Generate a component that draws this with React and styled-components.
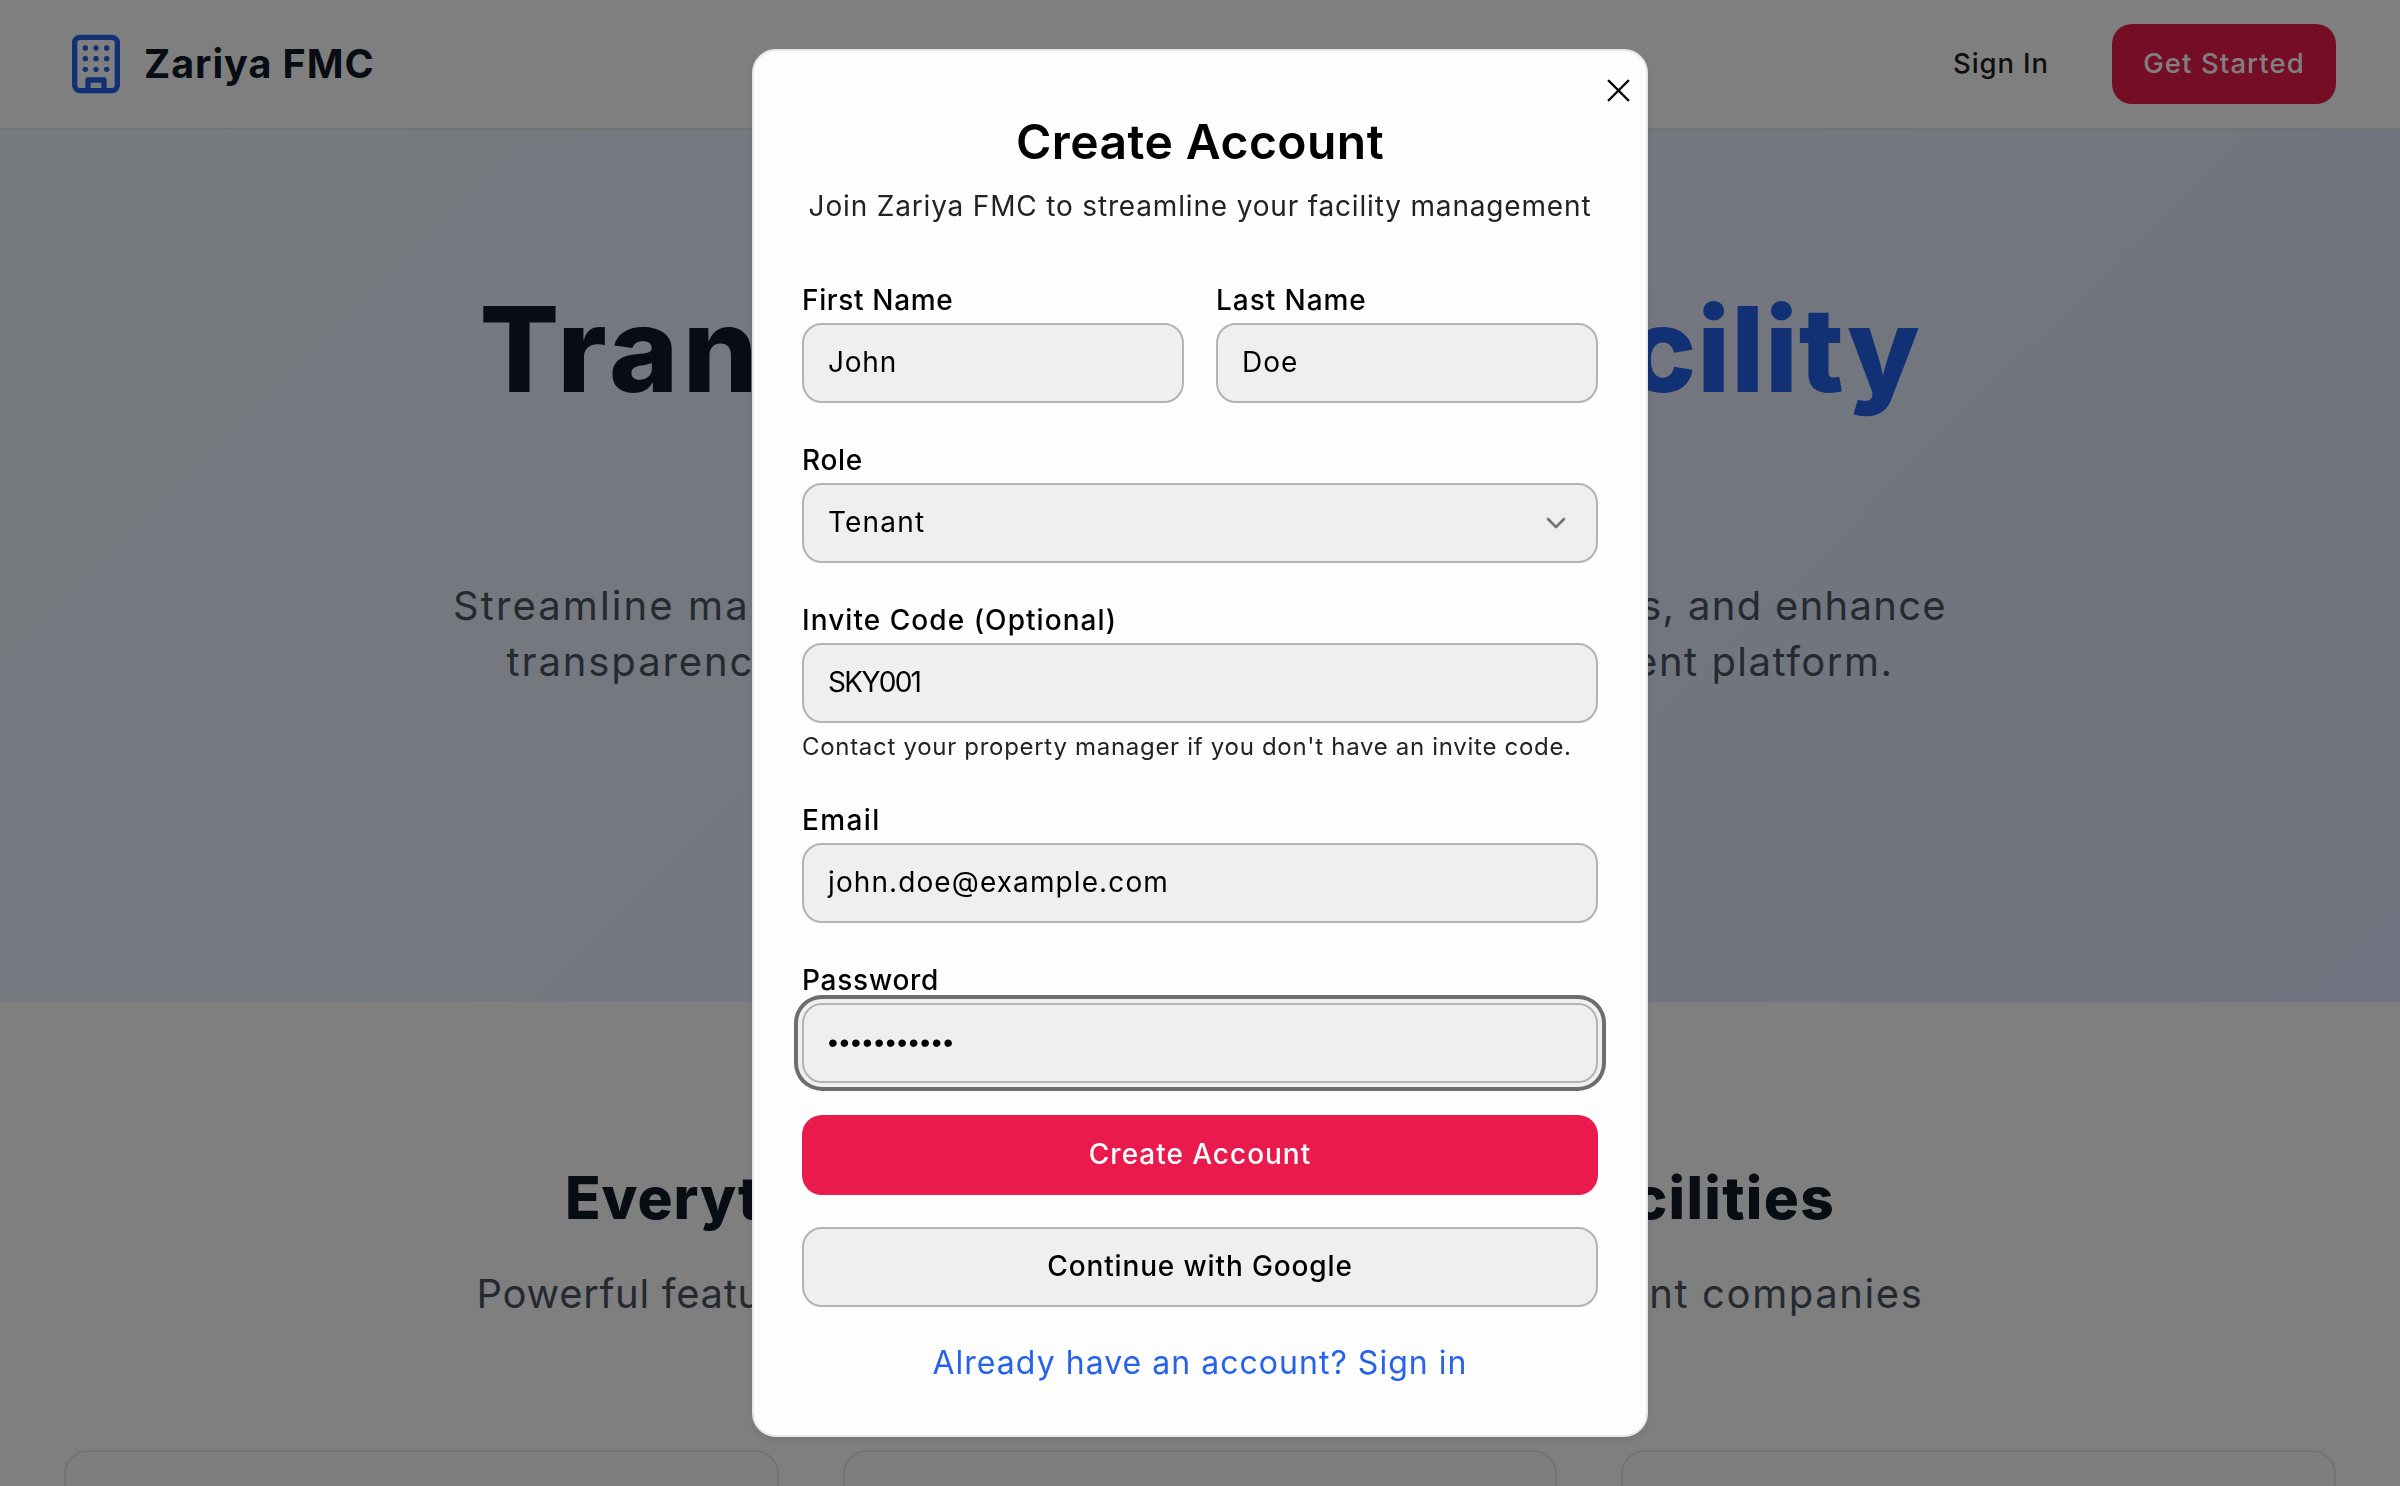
import React from "react";
import styled, { createGlobalStyle, css } from "styled-components";

const GlobalStyle = createGlobalStyle`
  *, *::before, *::after { box-sizing: border-box; }
  html, body, #root { height: 100%; }
  body {
    margin: 0;
    overflow: hidden;
    background: #ffffff;
    font-family: Inter, "Open Sans", sans-serif;
    color: #000;
  }
  h1, h2, p { margin: 0; }
  button, input { font-family: inherit; }
`;

/* ---------- landing page ---------- */

const Page = styled.div`
  width: 2400px;
  height: 1486px;
  overflow: hidden;
  background: #ffffff;
`;

const Header = styled.header`
  display: flex;
  align-items: center;
  justify-content: space-between;
  height: 130px;
  padding: 0 64px;
  border-bottom: 2px solid #e5e7eb;
`;

const Brand = styled.div`
  display: flex;
  align-items: center;
  gap: 16px;
  color: #2563eb;
`;

const BrandName = styled.span`
  font-size: 39.5px;
  line-height: 56px;
  font-weight: 700;
  letter-spacing: 0.95px;
  color: #111827;
`;

const Nav = styled.nav`
  display: flex;
  align-items: center;
  gap: 32px;
`;

const NavButton = styled.button`
  height: 80px;
  padding: 0 0 2px;
  border: 0;
  border-radius: 20px;
  font-size: 27.5px;
  font-weight: 500;
  text-align: center;
  ${({ $primary }) =>
    $primary
      ? css`
          width: 224px;
          background: #ea1a4d;
          color: #fff;
          letter-spacing: 1.1px;
        `
      : css`
          width: 158px;
          background: transparent;
          color: #1c1c1c;
          letter-spacing: 0.88px;
        `}
`;

const Hero = styled.section`
  display: flex;
  flex-direction: column;
  align-items: center;
  height: 872px;
  padding-top: 159px;
  background: linear-gradient(135deg, #eff6ff, #e0e7ff);
`;

const HeroTitle = styled.h1`
  display: flex;
  flex-direction: column;
  align-items: center;
  font-size: 118px;
  line-height: 120px;
  font-weight: 800;
  color: #111827;
`;

const Line = styled.span`
  display: flex;
  justify-content: space-between;
  width: ${({ $width }) => $width}px;
  white-space: pre;
`;

const Part = styled.span`
  letter-spacing: ${({ $track }) => $track}px;
`;

const Accent = styled.span`
  color: #2563eb;
`;

const Lead = styled.p`
  display: flex;
  flex-direction: column;
  align-items: center;
  margin-top: ${({ $top }) => $top}px;
  font-size: 40px;
  line-height: 56px;
  color: #4b5563;
`;

const Features = styled.section`
  display: flex;
  flex-direction: column;
  align-items: center;
  padding: 160px 64px 0;
`;

const SectionTitle = styled.h2`
  font-size: 58.5px;
  line-height: 72px;
  font-weight: 800;
  color: #111827;
`;

const CardGrid = styled.div`
  display: grid;
  grid-template-columns: repeat(3, 1fr);
  gap: 64px;
  width: 100%;
  margin-top: 128px;
`;

const Card = styled.div`
  height: 400px;
  border: 2px solid #e5e7eb;
  border-radius: 24px;
  background: #fdfdfd;
`;

/* ---------- dialog ---------- */

const Overlay = styled.div`
  position: fixed;
  inset: 0;
  display: flex;
  justify-content: center;
  align-items: flex-start;
  padding-top: 49px;
  background: rgba(0, 0, 0, 0.5);
`;

const Dialog = styled.div`
  position: relative;
  width: 896px;
  height: 1388px;
  padding: 67px 48px 0;
  border: 2px solid #e5e7e8;
  border-radius: 24px;
  background: #fdfdfd;
  box-shadow: 0 4px 8px rgba(0, 0, 0, 0.08);
`;

const CloseButton = styled.button`
  position: absolute;
  top: 20px;
  right: 8px;
  display: flex;
  padding: 0;
  border: 0;
  background: none;
  color: #000;
`;

const DialogTitle = styled.h2`
  font-size: 48px;
  line-height: 48px;
  font-weight: 600;
  letter-spacing: 0.45px;
  text-align: center;
`;

const DialogText = styled.p`
  margin-top: 20px;
  font-size: 28px;
  line-height: 40px;
  letter-spacing: 0.83px;
  text-align: center;
  white-space: nowrap;
  color: #222;
`;

const Form = styled.form`
  display: flex;
  flex-direction: column;
  gap: 43px;
  margin-top: 60px;
`;

const FieldRow = styled.div`
  display: grid;
  grid-template-columns: 1fr 1fr;
  gap: 32px;
`;

const Field = styled.div`
  display: flex;
  flex-direction: column;
`;

const Label = styled.label`
  height: 28px;
  margin-bottom: 9px;
  font-size: 28px;
  line-height: 28px;
  font-weight: 500;
  letter-spacing: ${({ $track }) => $track}px;
`;

const Control = styled.div`
  display: flex;
  align-items: center;
  justify-content: space-between;
  height: 80px;
  padding: 0 24px 2px 24px;
  border: 2px solid #b3b3b3;
  border-radius: 20px;
  background: #efefef;
  font-size: 28px;
  letter-spacing: ${({ $track }) => $track}px;
  ${({ $focused }) =>
    $focused &&
    css`
      box-shadow: 0 0 0 4px #f0f0f0, 0 0 0 8px #6d6d6d;
    `}

  svg {
    margin-top: 2px;
  }
`;

const Mask = styled.span`
  font-family: "Liberation Sans", Arial, sans-serif;
  font-size: 28px;
  letter-spacing: 1.73px;
`;

const Hint = styled.p`
  height: 32px;
  margin-top: 8px;
  font-size: 24px;
  line-height: 32px;
  letter-spacing: 0.7px;
  white-space: nowrap;
  color: #222;
`;

const Actions = styled.div`
  display: flex;
  flex-direction: column;
  gap: 32px;
  margin-top: 32px;
`;

const ActionButton = styled.button`
  height: 80px;
  padding: 0 0 2px;
  border-radius: 20px;
  font-size: 28px;
  font-weight: 500;
  ${({ $primary }) =>
    $primary
      ? css`
          border: 0;
          background: #ea1a4d;
          color: #fff;
          letter-spacing: 0.97px;
        `
      : css`
          border: 2px solid #b3b3b3;
          background: #efefef;
          color: #000;
          letter-spacing: 0.86px;
        `}
`;

const SwitchLink = styled.a`
  display: block;
  margin-top: 32px;
  font-size: 32px;
  line-height: 48px;
  letter-spacing: 1.03px;
  text-align: center;
  color: #2563eb;
`;

const stroke = {
  fill: "none",
  stroke: "currentColor",
  strokeLinecap: "round",
  strokeLinejoin: "round",
};

const BuildingIcon = () => (
  <svg width="64" height="64" viewBox="0 0 24 24" strokeWidth="2" {...stroke}>
    <rect x="4" y="2" width="16" height="20" rx="2" ry="2" />
    <path d="M9 22v-4h6v4" />
    {[6, 10, 14].map((y) =>
      [8, 12, 16].map((x) => <path key={`${x}-${y}`} d={`M${x} ${y}h.01`} />)
    )}
  </svg>
);

const CloseIcon = () => (
  <svg width="39" height="39" viewBox="0 0 24 24" strokeWidth="1.5" {...stroke}>
    <path d="M18 6 6 18M6 6l12 12" />
  </svg>
);

const ChevronIcon = () => (
  <svg width="32" height="32" viewBox="0 0 24 24" strokeWidth="2" opacity="0.5" {...stroke}>
    <path d="m6 9 6 6 6-6" />
  </svg>
);

function TextField({ label, labelTrack, value, track, hint, focused, icon }) {
  return (
    <Field>
      <Label $track={labelTrack}>{label}</Label>
      <Control $track={track} $focused={focused}>
        <span>{value}</span>
        {icon}
      </Control>
      {hint && <Hint>{hint}</Hint>}
    </Field>
  );
}

function Landing() {
  return (
    <Page>
      <Header>
        <Brand>
          <BuildingIcon />
          <BrandName>Zariya FMC</BrandName>
        </Brand>
        <Nav>
          <NavButton>Sign In</NavButton>
          <NavButton $primary>Get Started</NavButton>
        </Nav>
      </Header>
      <Hero>
        <HeroTitle>
          <Line $width={1441}>
            <Part $track={4.5}>Transform</Part>
            <Part $track={0.5}>
              Your <Accent>Facility</Accent>
            </Part>
          </Line>
          <Part $track={0}>Management</Part>
        </HeroTitle>
        <Lead $top={49}>
          <Line $width={1494}>
            <Part $track={2.1}>Streamline maintenance requests,</Part>
            <Part $track={1.3}>manage contractors, and enhance</Part>
          </Line>
          <Line $width={1387}>
            <Part $track={1.9}>transparency with our all-in-one</Part>
            <Part $track={1.5}>facility management platform.</Part>
          </Line>
        </Lead>
      </Hero>
      <Features>
        <SectionTitle>
          <Line $width={1270}>
            <Part $track={0.9}>Everything You Need to</Part>
            <Part $track={1.3}>Manage Facilities</Part>
          </Line>
        </SectionTitle>
        <Lead $top={32}>
          <Line $width={1447}>
            <Part $track={0.7}>Powerful features designed for</Part>
            <Part $track={1.6}>property management companies</Part>
          </Line>
        </Lead>
        <CardGrid>
          <Card />
          <Card />
          <Card />
        </CardGrid>
      </Features>
    </Page>
  );
}

export default function App() {
  return (
    <>
      <GlobalStyle />
      <Landing />
      <Overlay>
        <Dialog role="dialog">
          <CloseButton type="button" aria-label="Close">
            <CloseIcon />
          </CloseButton>
          <DialogTitle>Create Account</DialogTitle>
          <DialogText>Join Zariya FMC to streamline your facility management</DialogText>
          <Form>
            <FieldRow>
              <TextField label="First Name" labelTrack={0.65} value="John" track={0.8} />
              <TextField label="Last Name" labelTrack={0.95} value="Doe" track={1} />
            </FieldRow>
            <TextField label="Role" labelTrack={0.7} value="Tenant" track={1.2} icon={<ChevronIcon />} />
            <TextField
              label="Invite Code (Optional)"
              labelTrack={1.06}
              value="SKY001"
              track={-1.7}
              hint="Contact your property manager if you don't have an invite code."
            />
            <TextField label="Email" labelTrack={1.4} value="john.doe@example.com" track={1.1} />
            <TextField label="Password" labelTrack={0.75} value={<Mask>•••••••••••</Mask>} track={0} focused />
          </Form>
          <Actions>
            <ActionButton type="button" $primary>
              Create Account
            </ActionButton>
            <ActionButton type="button">Continue with Google</ActionButton>
          </Actions>
          <SwitchLink>Already have an account? Sign in</SwitchLink>
        </Dialog>
      </Overlay>
    </>
  );
}
